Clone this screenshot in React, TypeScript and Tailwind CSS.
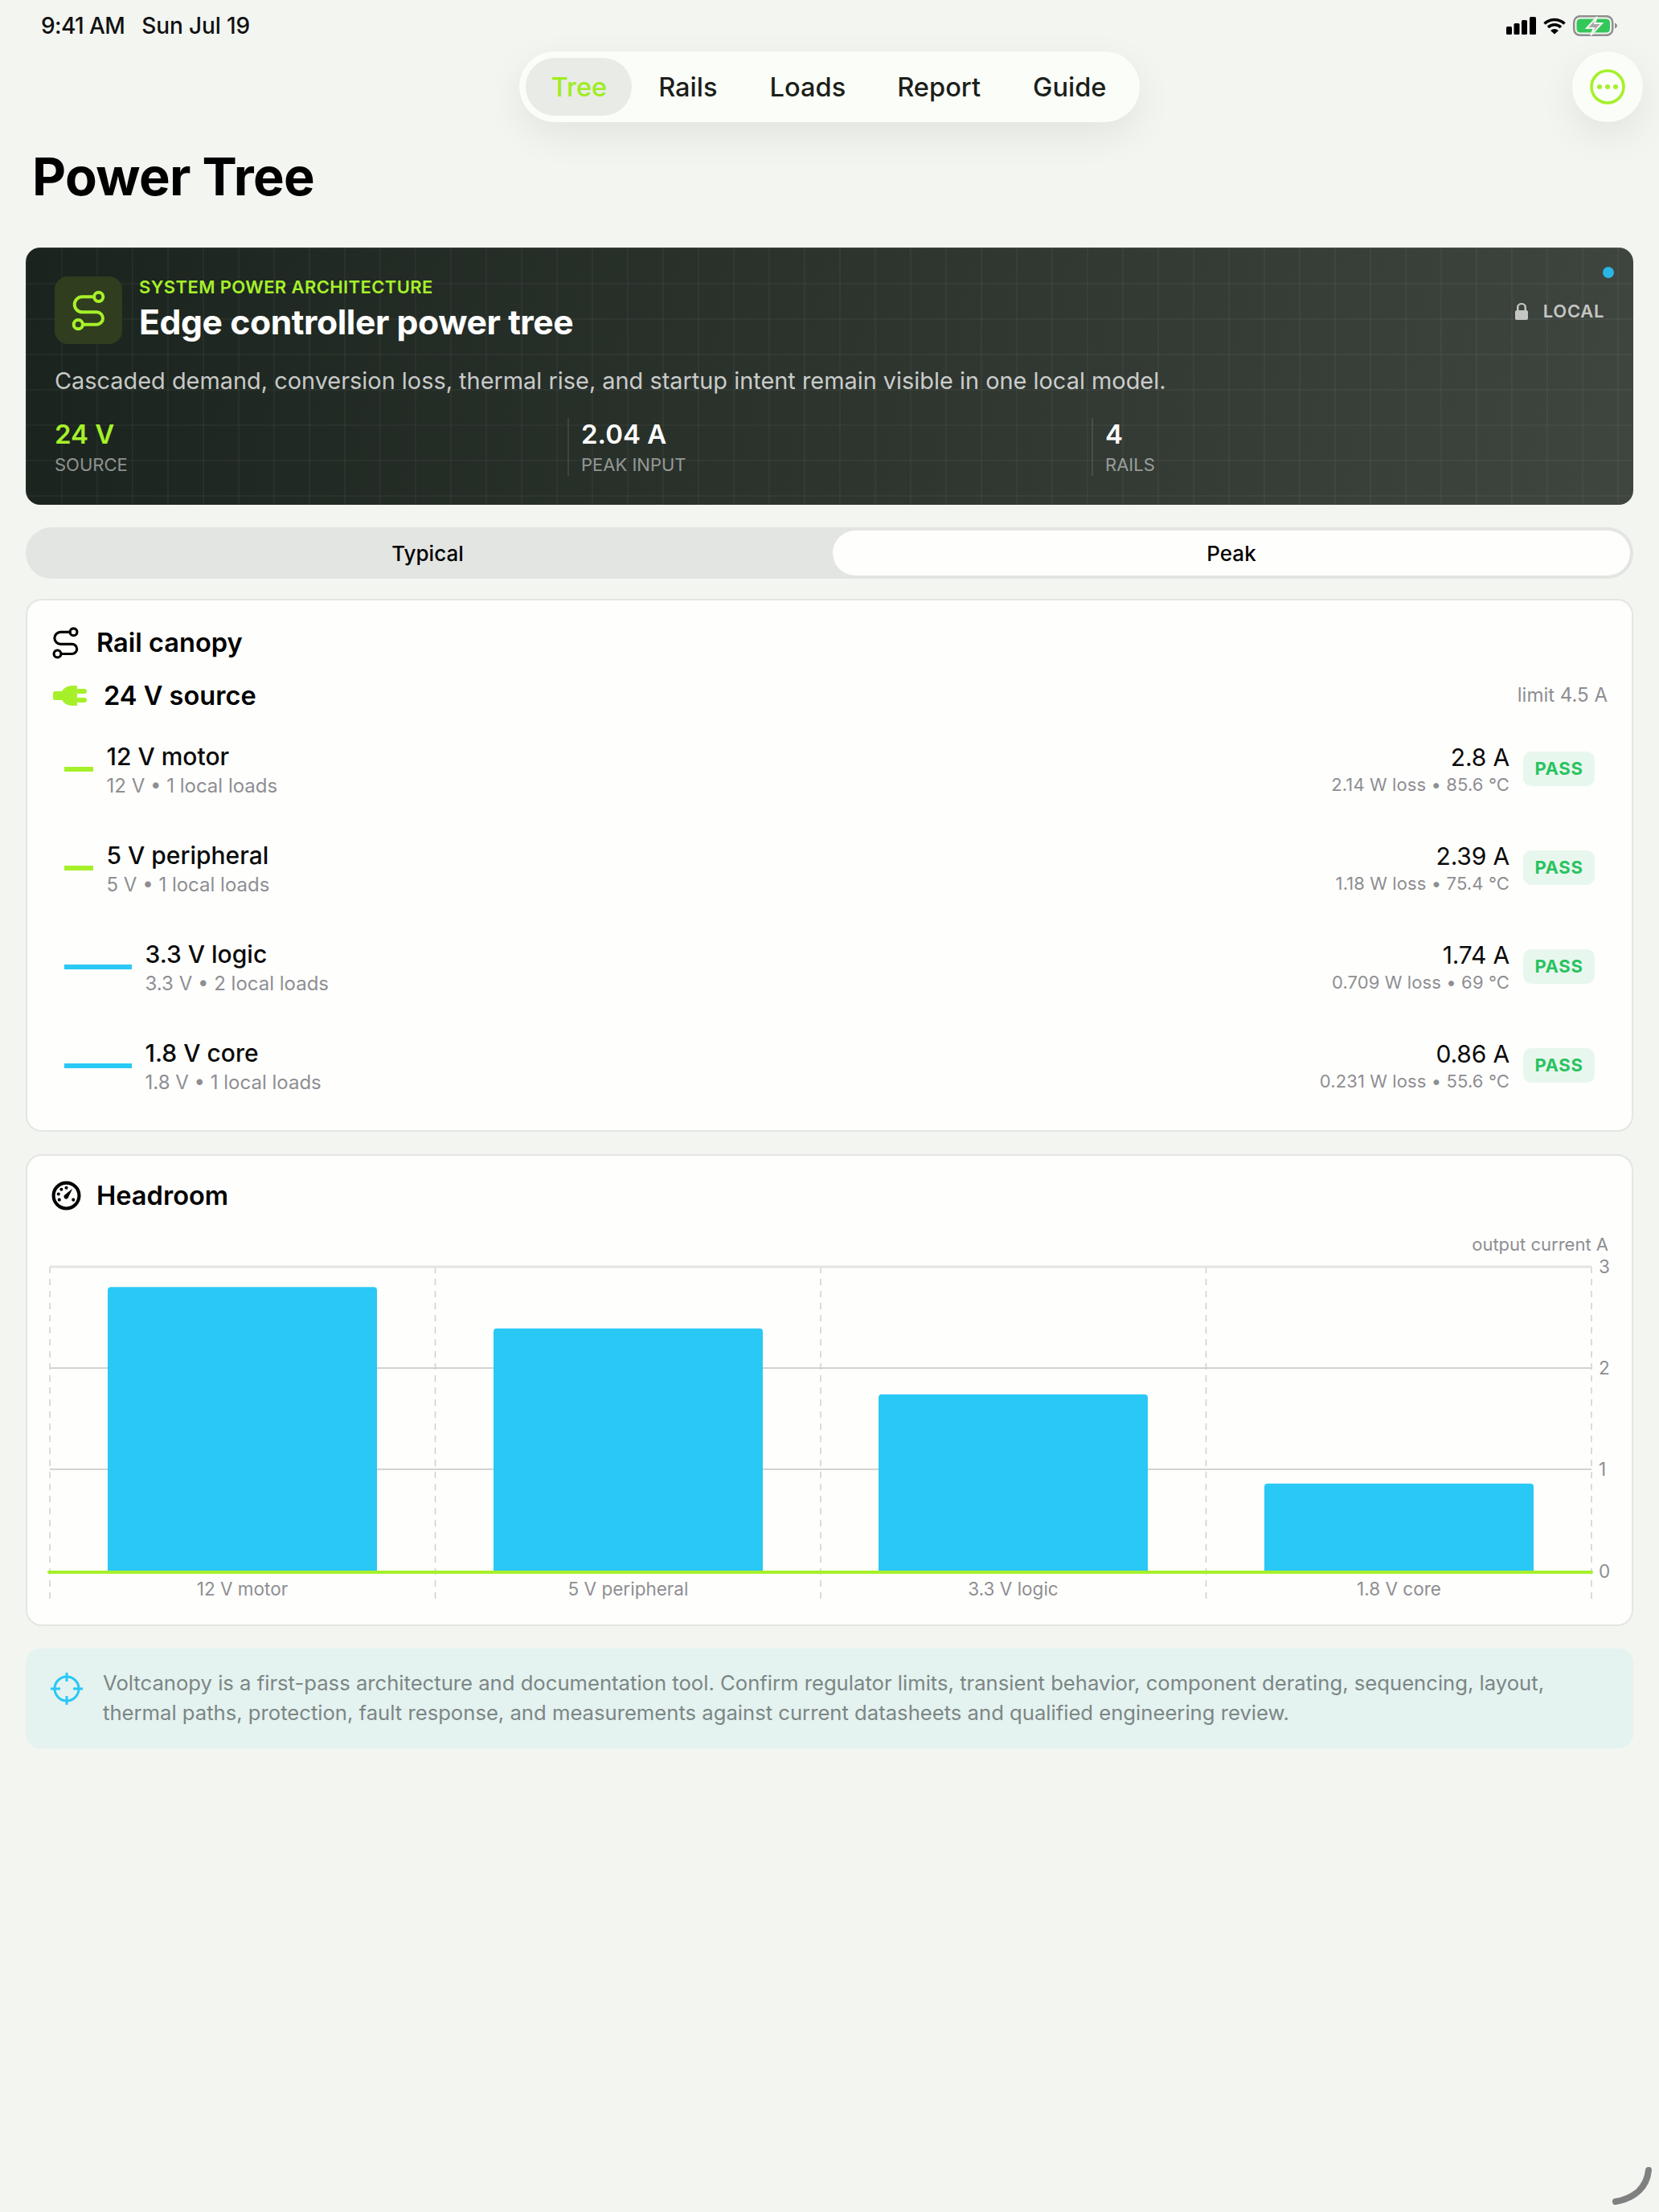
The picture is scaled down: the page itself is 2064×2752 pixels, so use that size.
import React from "react";

const LIME = "#a6f02a";

function RouteIcon({ className, color }: { className: string; color: string }) {
  return (
    <svg viewBox="16 16 52 52" className={className} fill="none" stroke={color} strokeWidth="4" strokeLinecap="round">
      <circle cx="54.7" cy="25.3" r="5.6" />
      <circle cx="29.3" cy="59.7" r="5.6" />
      <path d="M49 25.3H34.2a9.5 9.5 0 0 0 0 19H52.3a7.7 7.7 0 0 1 0 15.4H35" />
    </svg>
  );
}

function RailRow({ name, sub, amps, detail, color, barClass }: { name: string; sub: string; amps: string; detail: string; color: string; barClass: string }) {
  return (
    <div className="flex h-[123px] items-center px-4">
      <div className={`h-[6px] shrink-0 ${barClass}`} style={{ backgroundColor: color }} />
      <div className="mt-[3px] ml-[16.500px] flex flex-col">
        <span className="text-[30px] leading-[39px] font-medium text-[#0a0a0a]">{name}</span>
        <span className="text-[24px] leading-[34px] text-[#8e8e93]">{sub}</span>
      </div>
      <div className="mt-[1px] ml-auto flex flex-col items-end">
        <span className="text-[30px] leading-[38px] tracking-[-0.005em] text-[#0a0a0a]">{amps}</span>
        <span className="text-[22px] leading-[31px] tracking-[0.005em] text-[#8e8e93]">{detail}</span>
      </div>
      <div className="ml-[17px] flex h-[43px] w-[89px] items-center justify-center rounded-[10px] bg-[#e8f7ee] text-[22px] font-bold tracking-[0.03em] text-[#29c35f]">
        PASS
      </div>
    </div>
  );
}

function Stat({ value, label, valueClass, divider }: { value: string; label: string; valueClass: string; divider: boolean }) {
  return (
    <div className={`flex h-[72px] flex-col ${divider ? "border-l-2 border-white/10 pl-[15px]" : ""}`}>
      <span className={`text-[33px] leading-[40px] font-semibold ${valueClass}`}>{value}</span>
      <span className="mt-[4px] text-[22px] leading-[28px] text-white/50">{label}</span>
    </div>
  );
}

const bars = [
  { x: 134, v: 2.8, label: "12 V motor" },
  { x: 614, v: 2.39, label: "5 V peripheral" },
  { x: 1093, v: 1.74, label: "3.3 V logic" },
  { x: 1573, v: 0.86, label: "1.8 V core" },
];

function Chart() {
  const zero = 1954;
  return (
    <svg viewBox="64 1530 1936 470" className="mt-[21px] h-[470px] w-[1936px] overflow-visible">
      <text x="2001" y="1556" textAnchor="end" fontSize="22" fill="#8e8e93">output current A</text>
      {[62, 541.5, 1021, 1500.5, 1980].map((x) => (
        <line key={x} x1={x} x2={x} y1="1576" y2="1990" stroke="#cfd1cf" strokeWidth="1.5" strokeDasharray="8 7" />
      ))}
      <line x1="62" x2="1980" y1="1576" y2="1576" stroke="#e3e5e2" strokeWidth="3" />
      <line x1="62" x2="1980" y1="1702" y2="1702" stroke="#d2d4d2" strokeWidth="2" />
      <line x1="62" x2="1980" y1="1828" y2="1828" stroke="#d2d4d2" strokeWidth="2" />
      {bars.map((b) => {
        const h = b.v * 126;
        return (
          <g key={b.label}>
            <path d={`M${b.x} ${zero}V${zero - h + 4}a4 4 0 0 1 4-4H${b.x + 331}a4 4 0 0 1 4 4V${zero}Z`} fill="#29c8f5" />
            <text x={b.x + 167.5} y="1985" textAnchor="middle" fontSize="22.500" fill="#8e8e93">{b.label}</text>
          </g>
        );
      })}
      <line x1="61" x2="1980" y1="1956" y2="1956" stroke={LIME} strokeWidth="4" strokeLinecap="round" />
      {[["3", 1576], ["2", 1702], ["1", 1828], ["0", 1955]].map(([t, y]) => (
        <text key={t as string} x="1989" y={(y as number) + 8} fontSize="22.500" fill="#8e8e93">{t}</text>
      ))}
    </svg>
  );
}

export default function App() {
  return (
    <div className="relative min-h-[2752px] w-[2064px] bg-[#f3f5f1] [font-family:Inter,'Noto_Sans',sans-serif] text-[#0a0a0a]">
      {/* status bar */}
      <div className="flex h-[64px] items-start justify-between pt-[14px] pl-[51px] pr-[52px]">
        <div className="flex gap-[21px] text-[28px] leading-[36px] font-medium tracking-[-0.02em] text-[#111]">
          <span>9:41 AM</span>
          <span className="tracking-[-0.005em]">Sun Jul 19</span>
        </div>
        <svg viewBox="1874 19 138 26" className="mt-[5px] h-[26px] w-[138px]">
          <rect x="1874" y="33" width="7" height="10" rx="1.5" />
          <rect x="1883.5" y="29" width="7" height="14" rx="1.5" />
          <rect x="1893" y="25" width="7" height="18" rx="1.5" />
          <rect x="1903" y="21" width="8" height="22" rx="1.5" />
          <path d="M1921.5 29.5a18 18 0 0 1 25 0M1926 34a11.5 11.5 0 0 1 16 0" fill="none" stroke="#000" strokeWidth="3.6" />
          <path d="M1934 42.5l-5-4.5a7.5 7.5 0 0 1 10 0z" />
          <rect x="1958.2" y="20.2" width="48" height="23.6" rx="7.5" fill="none" stroke="#8f8f8f" strokeWidth="2.5" />
          <rect x="1961.5" y="23.5" width="41.5" height="17" rx="4.5" fill="#34c759" />
          <path d="M2009 28.5c2 .8 3 2 3 3.500s-1 2.700-3 3.500z" fill="#8f8f8f" />
          <path d="M1987 21l-13 14h9l-4 9 14-15h-9z" fill="#a9a9a9" stroke="#f3f5f1" strokeWidth="2" />
        </svg>
      </div>

      {/* nav */}
      <div className="relative flex h-[88px] justify-center">
        <nav className="flex h-[88px] items-center rounded-[44px] bg-[#fbfdf8] px-[8px] shadow-[0_16px_48px_rgba(0,0,0,0.07)] text-[32.600px] font-medium text-[#1c1f1b]">
          <div className="flex h-[72px] items-center rounded-[36px] bg-[#e8ebe6] px-[31px] text-[#9fec1f]">Tree</div>
          <div className="px-[33px]">Rails</div>
          <div className="px-[32px]">Loads</div>
          <div className="px-[32px]">Report</div>
          <div className="px-[33px]">Guide</div>
        </nav>
        <button className="absolute top-0 right-[20px] flex h-[88px] w-[88px] items-center justify-center rounded-full bg-[#fbfdf8] shadow-[0_16px_48px_rgba(0,0,0,0.07)]">
          <svg viewBox="0 0 44 44" className="h-[44px] w-[44px]" fill={LIME}>
            <circle cx="22" cy="22" r="20" fill="none" stroke={LIME} strokeWidth="3.6" />
            <circle cx="12" cy="22" r="3" />
            <circle cx="22" cy="22" r="3" />
            <circle cx="32" cy="22" r="3" />
          </svg>
        </button>
      </div>

      <h1 className="mt-[28px] ml-[40px] h-[80px] text-[65px] leading-[80px] font-bold tracking-[-0.01em] text-black">Power Tree</h1>

      <main className="mt-[48px] flex flex-col px-[32px]">
        {/* hero */}
        <section className="relative h-[320px] rounded-[18px] px-[36px] pt-[36px] [background-image:linear-gradient(rgba(255,255,255,0.035)_2px,transparent_2px),linear-gradient(90deg,rgba(255,255,255,0.035)_2px,transparent_2px),linear-gradient(100deg,#1a231d,#3f453f)] [background-size:44px_44px,44px_44px,100%_100%]">
          <div className="absolute top-[24px] right-[24px] h-[14px] w-[14px] rounded-full bg-[#29b6e4]" />
          <div className="absolute top-[63px] right-[36px] flex items-center gap-[19px] text-[22px] font-semibold tracking-[0.03em] text-[#c4c6c3]">
            <svg viewBox="0 0 16 21" className="h-[21px] w-[16px]" fill="#c4c6c3">
              <path d="M2 21a2 2 0 0 1-2-2v-8a2 2 0 0 1 2-2V5a6 5 0 0 1 12 0v4a2 2 0 0 1 2 2v8a2 2 0 0 1-2 2zM4.500 9h7V5a3.500 3 0 0 0-7 0z" />
            </svg>
            LOCAL
          </div>
          <div className="flex items-start gap-[21px]">
            <div className="flex h-[84px] w-[84px] items-center justify-center rounded-[16px] bg-[#303d1f]">
              <RouteIcon className="h-[52px] w-[52px]" color={LIME} />
            </div>
            <div className="flex flex-col">
              <span className="text-[22px] leading-[26px] font-semibold tracking-[0.018em] text-[#a6f02a]">SYSTEM POWER ARCHITECTURE</span>
              <span className="mt-[5px] text-[42.700px] leading-[52px] font-bold tracking-[-0.01em] text-white">Edge controller power tree</span>
            </div>
          </div>
          <p className="mt-[28px] text-[28.900px] leading-[36px] text-white/75">
            Cascaded demand, conversion loss, thermal rise, and startup intent remain visible in one local model.
          </p>
          <div className="mt-[28px] grid grid-cols-[638px_652px_1fr]">
            <Stat value="24 V" label="SOURCE" valueClass="text-[#a6f02a]" divider={false} />
            <Stat value="2.04 A" label="PEAK INPUT" valueClass="text-white" divider />
            <Stat value="4" label="RAILS" valueClass="text-white" divider />
          </div>
        </section>

        {/* segmented */}
        <div className="mt-[28px] grid h-[64px] grid-cols-[1000px_992px] rounded-[32px] bg-[#e3e5e2] p-[4px] text-[26px] font-medium text-black">
          <div className="flex items-center justify-center pr-[8px]">Typical</div>
          <div className="flex items-center justify-center rounded-[28px] bg-[#fefefc]">Peak</div>
        </div>

        {/* rail canopy */}
        <section className="mt-[25px] rounded-[20px] border-2 border-[#e4e6e3] bg-[#fefefc] px-[30px] pt-[30px] pb-[19px]">
          <div className="flex h-[44px] items-center">
            <RouteIcon className="-ml-[3px] h-[41px] w-[41px]" color="#000" />
            <h2 className="ml-[18px] text-[32.600px] font-semibold text-black">Rail canopy</h2>
          </div>
          <div className="mt-[22px] flex h-[44px] items-center">
            <svg viewBox="0 0 42 25" className="ml-[2px] h-[25px] w-[42px]" fill={LIME}>
              <rect x="0" y="7" width="14" height="11" rx="2.500" />
              <path d="M10 12.500C10 5 16 0 24 0h6v25h-6c-8 0-14-5-14-12.500z" />
              <rect x="29" y="4" width="13" height="6" rx="3" />
              <rect x="29" y="15" width="13" height="6" rx="3" />
            </svg>
            <span className="ml-[21px] text-[32.600px] font-semibold text-black">24 V source</span>
            <span className="ml-auto text-[24px] text-[#8e8e93]">limit 4.5 A</span>
          </div>
          <div className="mt-[8px] flex flex-col">
            <RailRow name="12 V motor" sub="12 V • 1 local loads" amps="2.8 A" detail="2.14 W loss • 85.6 °C" color={LIME} barClass="w-[36px]" />
            <RailRow name="5 V peripheral" sub="5 V • 1 local loads" amps="2.39 A" detail="1.18 W loss • 75.4 °C" color={LIME} barClass="w-[36px]" />
            <RailRow name="3.3 V logic" sub="3.3 V • 2 local loads" amps="1.74 A" detail="0.709 W loss • 69 °C" color="#29c8f5" barClass="w-[84px]" />
            <RailRow name="1.8 V core" sub="1.8 V • 1 local loads" amps="0.86 A" detail="0.231 W loss • 55.6 °C" color="#29c8f5" barClass="w-[84px]" />
          </div>
        </section>

        {/* headroom */}
        <section className="mt-[28px] rounded-[20px] border-2 border-[#e4e6e3] bg-[#fefefc] px-[30px] pt-[27px] pb-[21px]">
          <div className="flex h-[44px] items-center gap-[19px]">
            <svg viewBox="0 0 36 36" className="h-[37px] w-[37px]">
              <circle cx="18" cy="18" r="15.500" fill="none" stroke="#000" strokeWidth="4" />
              <circle cx="9.500" cy="23" r="2" />
              <circle cx="8.500" cy="16" r="2" />
              <circle cx="12" cy="10.500" r="2" />
              <circle cx="18" cy="8.500" r="2" />
              <circle cx="26.500" cy="23" r="2" />
              <path d="M25.500 9.500L20.500 20a2.800 2.800 0 1 1-4.600-2.800z" />
            </svg>
            <h2 className="text-[32.600px] font-semibold text-black">Headroom</h2>
          </div>
          <Chart />
        </section>

        {/* note */}
        <aside className="mt-[28px] flex h-[124px] items-start rounded-[18px] bg-[#e4f2f0] pt-[25px] pr-[32px] pl-[29px]">
          <svg viewBox="0 0 44 44" className="mt-[3px] h-[44px] w-[44px] shrink-0" fill="none" stroke="#29c8f5" strokeWidth="3">
            <circle cx="22" cy="22" r="15" />
            <path d="M22 2v11M22 31v11M2 22h12M30 22h12" />
          </svg>
          <p className="ml-[23px] text-[25.650px] leading-[36.500px] text-[#7c8684]">
            Voltcanopy is a first-pass architecture and documentation tool. Confirm regulator limits, transient behavior, component derating, sequencing, layout, thermal paths, protection, fault response, and measurements against current datasheets and qualified engineering review.
          </p>
        </aside>
      </main>

      {/* corner scribble */}
      <svg viewBox="0 0 64 64" className="absolute right-[0px] bottom-[0px] h-[64px] w-[64px]" fill="none">
        <path d="M51 12C49 32 35 47 10 51" stroke="#808080" strokeWidth="8" strokeLinecap="round" />
      </svg>
    </div>
  );
}
